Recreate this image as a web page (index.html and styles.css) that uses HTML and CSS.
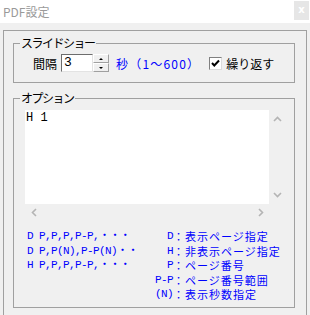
FILE: index.html
```html
<!DOCTYPE html>
<html lang="ja">
<head>
  <meta charset="UTF-8" />
  <meta name="viewport" content="width=device-width, initial-scale=1" />
  <title>PDF設定</title>
  <link rel="stylesheet" href="styles.css">
</head>
<body>
  <div class="titlebar">
    <span class="title">PDF設定</span>
    <span class="close">x</span>
  </div>

  <div class="panel">
    <div class="frame">
      <fieldset class="group slideshow">
        <legend>スライドショー</legend>
        <div class="interval-row">
          <span class="label">間隔</span>
          <div class="spin">
            <span class="spin-value">3</span>
            <div class="spin-buttons">
              <span class="spin-btn up"></span>
              <span class="spin-btn down"></span>
            </div>
          </div>
          <span class="range">秒（1～600）</span>
          <label class="check">
            <span class="check-box">
              <svg width="11" height="11" viewBox="0 0 11 11"><path d="M2 5 L4.3 7.5 L9 2.5" fill="none" stroke="#000" stroke-width="2"/></svg>
            </span>
            繰り返す
          </label>
        </div>
      </fieldset>

      <fieldset class="group options">
        <legend>オプション</legend>
        <div class="editor">
          <div class="editor-text">H 1</div>
          <div class="vscroll">
            <svg width="9" height="6" viewBox="0 0 9 6"><path d="M1 5 L4.5 1.5 L8 5" fill="none" stroke="#b4b4b4" stroke-width="1.6"/></svg>
            <svg width="9" height="6" viewBox="0 0 9 6"><path d="M1 1 L4.5 4.5 L8 1" fill="none" stroke="#b4b4b4" stroke-width="1.6"/></svg>
          </div>
          <div class="hscroll">
            <svg width="6" height="9" viewBox="0 0 6 9"><path d="M5 1 L1.5 4.5 L5 8" fill="none" stroke="#b4b4b4" stroke-width="1.6"/></svg>
            <svg width="6" height="9" viewBox="0 0 6 9"><path d="M1 1 L4.5 4.5 L1 8" fill="none" stroke="#b4b4b4" stroke-width="1.6"/></svg>
          </div>
          <div class="corner"></div>
        </div>

        <div class="help">
          <div class="syntax">
            <div>D P,P,P,P-P,・・・</div>
            <div>D P,P(N),P-P(N)・・</div>
            <div>H P,P,P,P-P,・・・</div>
          </div>
          <div class="keys">
            <span class="key">D</span><span class="desc">：表示ページ指定</span>
            <span class="key">H</span><span class="desc">：非表示ページ指定</span>
            <span class="key">P</span><span class="desc">：ページ番号</span>
            <span class="key">P-P</span><span class="desc">：ページ番号範囲</span>
            <span class="key">(N)</span><span class="desc">：表示秒数指定</span>
          </div>
        </div>
      </fieldset>
    </div>
  </div>
</body>
</html>
```

FILE: styles.css
```css
* {
  margin: 0;
  padding: 0;
  box-sizing: border-box;
}

body {
  width: 310px;
  height: 315px;
  overflow: hidden;
  background: #f0f0f0;
  font-family: "Noto Sans CJK JP", "Noto Sans", sans-serif;
  font-size: 12px;
  color: #000;
}

.titlebar {
  height: 23px;
  background: #fff;
  display: flex;
  align-items: flex-start;
  padding-left: 3px;
}

.title {
  color: #9a9a9a;
  font-size: 12px;
  line-height: 14px;
  margin-top: 5px;
}

.close {
  margin-left: auto;
  margin-top: 1px;
  margin-right: 1px;
  width: 15px;
  height: 19px;
  background: #e6e6e6;
  color: #fff;
  font-family: "DejaVu Sans", sans-serif;
  font-size: 10px;
  font-weight: bold;
  line-height: 18px;
  text-align: center;
}

.panel {
  padding-top: 7px;
}

/* outer frame runs off the bottom of the window */
.frame {
  margin-left: 3px;
  width: 304px;
  border: 1px solid #a0a0a0;
  padding: 5px 11px 20px 9px;
}

.group {
  border: 1px solid #a0a0a0;
  padding: 0 6px;
  min-inline-size: 0;
}

.group legend {
  padding: 0 1px;
  font-size: 12px;
  line-height: 14px;
  letter-spacing: -1.5px;
}

.slideshow {
  padding-top: 4px;
  padding-bottom: 10px;
}

.interval-row {
  display: flex;
  align-items: center;
  height: 18px;
  padding-left: 13px;
}

.label {
  width: 24px;
  margin-right: 4px;
}

.spin {
  display: flex;
  height: 18px;
}

.spin-value {
  width: 32px;
  height: 18px;
  background: #fff;
  border: 1px solid;
  border-color: #6d6d6d #e3e3e3 #e3e3e3 #6d6d6d;
  padding-left: 2px;
  font-family: "Liberation Mono", monospace;
  font-size: 13px;
  line-height: 16px;
}

.spin-buttons {
  width: 16px;
  display: flex;
  flex-direction: column;
}

.spin-btn {
  height: 9px;
  background: #f0f0f0;
  border: 1px solid;
  border-color: #fff #a0a0a0 #a0a0a0 #fff;
  display: flex;
  align-items: center;
  justify-content: center;
}

.spin-btn::after {
  content: "";
  border-left: 2px solid transparent;
  border-right: 2px solid transparent;
}

.spin-btn.up::after {
  border-bottom: 2px solid #000;
}

.spin-btn.down::after {
  border-top: 2px solid #000;
}

.range {
  margin-left: 7px;
  color: #0000ff;
  letter-spacing: 1.2px;
}

.check {
  margin-left: 9px;
  display: flex;
  align-items: center;
  gap: 4px;
}

.check-box {
  width: 13px;
  height: 13px;
  background: #fff;
  border: 1px solid;
  border-color: #808080 #dcdcdc #dcdcdc #808080;
  display: flex;
  align-items: center;
  justify-content: center;
}

.options {
  margin-top: 8px;
  padding-top: 5px;
  padding-bottom: 5px;
}

.editor {
  margin-left: 5px;
  width: 261px;
  display: grid;
  grid-template-columns: 244px 17px;
  grid-template-rows: 94px 17px;
}

.editor-text {
  background: #fff;
  padding: 1px 0 0 1px;
  font-family: "Liberation Mono", monospace;
  font-size: 12px;
  line-height: 14px;
}

.vscroll {
  display: flex;
  flex-direction: column;
  justify-content: space-between;
  align-items: center;
  padding: 6px 0 6px;
}

.hscroll {
  display: flex;
  justify-content: space-between;
  align-items: center;
  padding: 0 5px 0 6px;
}

.help {
  display: flex;
  margin-top: 8px;
  padding-left: 7px;
  color: #0000ff;
  line-height: 14.5px;
}

.syntax {
  width: 128px;
  font-family: "Liberation Mono", "Noto Sans CJK JP", monospace;
  font-size: 11px;
  letter-spacing: -0.6px;
  white-space: nowrap;
}

.keys {
  display: grid;
  grid-template-columns: 18px auto;
  white-space: nowrap;
}

.key {
  justify-self: end;
  font-family: "Liberation Mono", monospace;
  font-size: 11px;
  letter-spacing: -0.6px;
}

.desc {
  font-size: 11px;
  letter-spacing: 1px;
}
```
